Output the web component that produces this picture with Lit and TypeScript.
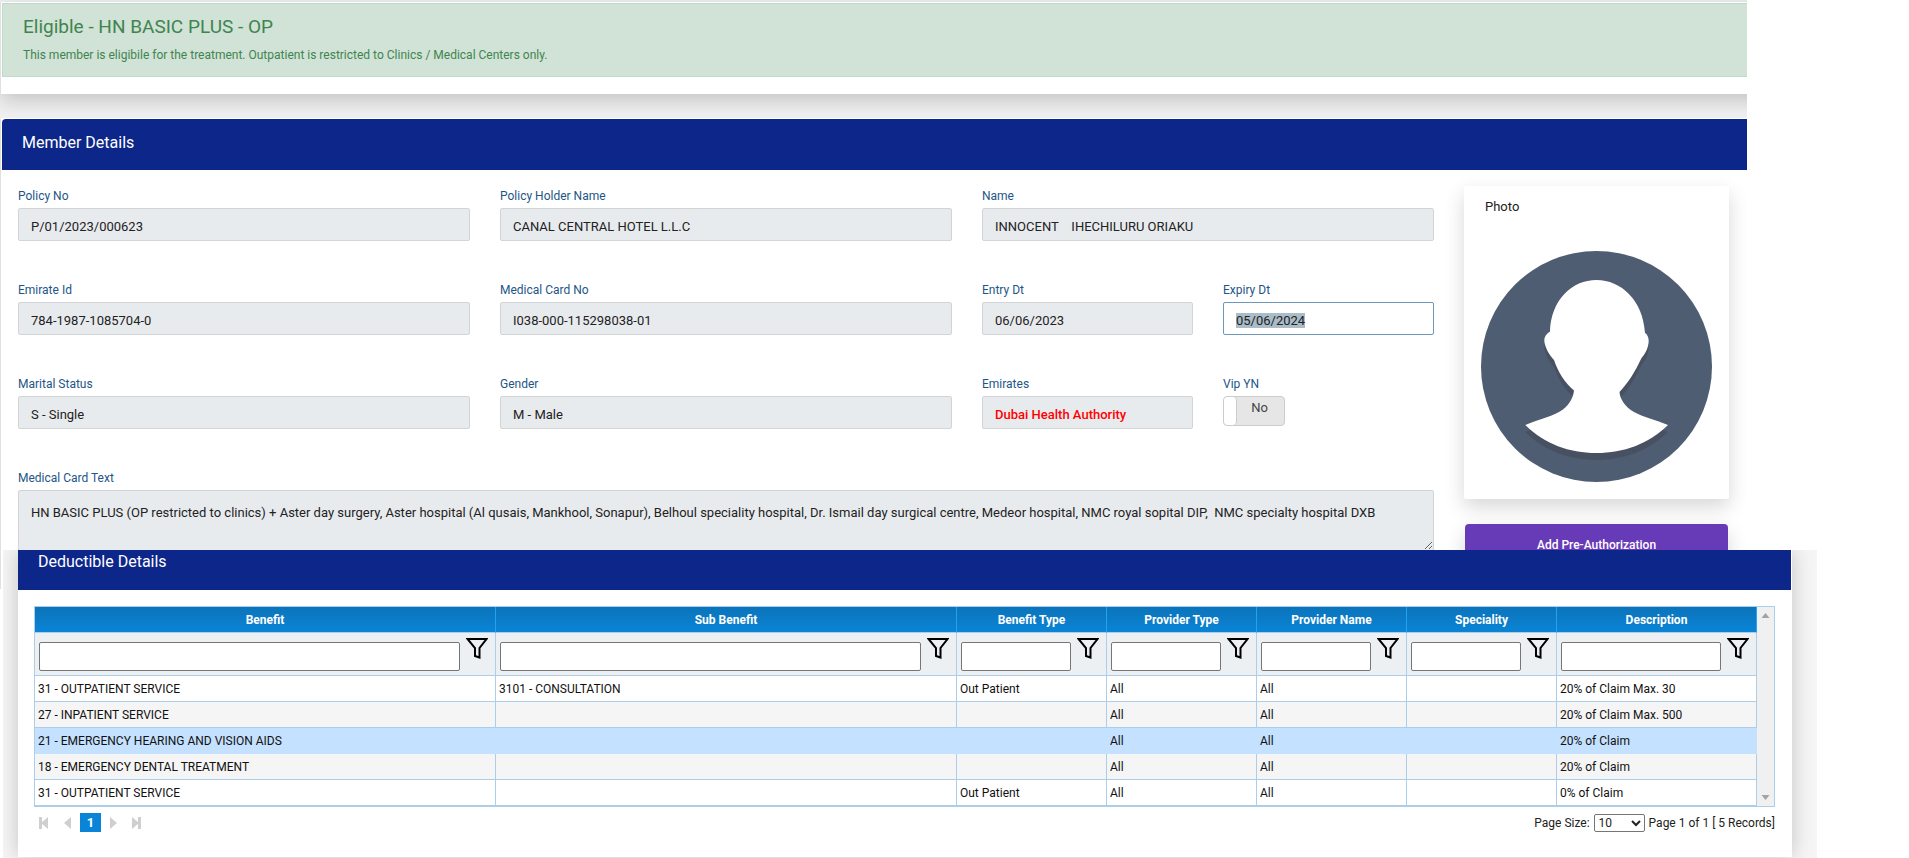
import { LitElement, html, css, svg, nothing } from "lit";
import { customElement } from "lit/decorators.js";
import { classMap } from "lit/directives/class-map.js";

interface Field {
  id: string;
  label: string;
  value: string;
  wide?: boolean;
  alert?: boolean;
  editable?: boolean;
}

const fieldsTop: Field[] = [
  { id: "policy", label: "Policy No", value: "P/01/2023/000623", wide: true },
  { id: "holder", label: "Policy Holder Name", value: "CANAL CENTRAL HOTEL L.L.C", wide: true },
  { id: "name", label: "Name", value: "INNOCENT    IHECHILURU ORIAKU", wide: true },
  { id: "emirate-id", label: "Emirate Id", value: "784-1987-1085704-0", wide: true },
  { id: "card-no", label: "Medical Card No", value: "I038-000-115298038-01", wide: true },
  { id: "entry", label: "Entry Dt", value: "06/06/2023" },
  { id: "expiry", label: "Expiry Dt", value: "05/06/2024", editable: true },
  { id: "marital", label: "Marital Status", value: "S - Single", wide: true },
  { id: "gender", label: "Gender", value: "M - Male", wide: true },
  { id: "emirates", label: "Emirates", value: "Dubai Health Authority", alert: true },
];

const cardText =
  "HN BASIC PLUS (OP restricted to clinics) + Aster day surgery, Aster hospital (Al qusais, Mankhool, Sonapur), Belhoul speciality hospital, Dr. Ismail day surgical centre, Medeor hospital, NMC royal sopital DIP,  NMC specialty hospital DXB";

const columns = [
  "Benefit",
  "Sub Benefit",
  "Benefit Type",
  "Provider Type",
  "Provider Name",
  "Speciality",
  "Description",
];

const rows: string[][] = [
  ["31 - OUTPATIENT SERVICE", "3101 - CONSULTATION", "Out Patient", "All", "All", "", "20% of Claim Max. 30"],
  ["27 - INPATIENT SERVICE", "", "", "All", "All", "", "20% of Claim Max. 500"],
  ["21 - EMERGENCY HEARING AND VISION AIDS", "", "", "All", "All", "", "20% of Claim"],
  ["18 - EMERGENCY DENTAL TREATMENT", "", "", "All", "All", "", "20% of Claim"],
  ["31 - OUTPATIENT SERVICE", "", "Out Patient", "All", "All", "", "0% of Claim"],
];

@customElement("member-panel")
export class MemberPanel extends LitElement {
  static styles = css`
    :host {
      display: block;
      border-left: 1px solid #e0e0e0;
      background: #fff;
      padding-left: 1px;
      border-top: 1px solid #fff;
    }
    .title {
      margin: 0;
      background: #0d2689;
      color: #fff;
      font-size: 16px;
      line-height: 22px;
      font-weight: 400;
      padding: 13px 20px 16px;
      border-top-left-radius: 4px;
    }
    .body {
      display: flex;
      align-items: flex-start;
      gap: 30px;
      padding: 16px 18px 23px 16px;
    }
    .fields {
      flex: 1;
      min-width: 0;
      display: grid;
      grid-template-columns: repeat(6, minmax(0, 1fr));
      gap: 40px 30px;
      padding-top: 1px;
    }
    .field {
      display: flex;
      flex-direction: column;
      align-items: stretch;
      gap: 3px;
    }
    .wide {
      grid-column: span 2;
    }
    .full {
      grid-column: 1 / -1;
    }
    label {
      font-size: 12px;
      line-height: 18px;
      color: #1d5687;
    }
    .box {
      box-sizing: border-box;
      width: 100%;
      margin: 0;
      height: 33px;
      padding: 4px 12px 0;
      border: 1px solid #d2d4d6;
      border-radius: 2px;
      background: #e8ebee;
      color: #222;
      font-family: inherit;
      font-size: 13px;
      outline: none;
    }
    .editable {
      background: #fff;
      border-color: #6d98b9;
    }
    .editable::selection {
      background: #a9bcc8;
      color: #222;
    }
    .alert {
      color: #f00;
      font-weight: 500;
    }
    .area {
      display: block;
      height: 61px;
      padding-top: 12px;
      line-height: 20px;
    }
    .toggle {
      box-sizing: border-box;
      display: flex;
      width: 62px;
      height: 30px;
      border: 1px solid #ccc;
      border-radius: 4px;
      background: #e6e6e6;
      overflow: hidden;
    }
    .knob {
      appearance: none;
      margin: 0;
      width: 13px;
      height: 28px;
      background: #fff;
      border-right: 1px solid #ccc;
      border-radius: 4px;
    }
    .state {
      flex: 1;
      padding-right: 2px;
      text-align: center;
      font-size: 13px;
      line-height: 22px;
      color: #444;
    }
    .side {
      width: 265px;
      display: flex;
      flex-direction: column;
      gap: 25px;
    }
    .photo {
      box-shadow: 0 8px 20px rgba(0, 0, 0, 0.16);
      border-radius: 2px;
      padding: 12px 17px 17px;
      background: #fff;
    }
    .caption {
      margin: 0 4px 35px;
      font-size: 13px;
      line-height: 18px;
      font-weight: 400;
      color: #222;
    }
    .avatar {
      display: block;
      width: 100%;
    }
    .add {
      margin: 0 1px;
      height: 42px;
      padding: 0;
      border: 0;
      border-radius: 4px;
      background: #673ab7;
      color: #fff;
      font-family: inherit;
      font-size: 12px;
      font-weight: 500;
      box-shadow: 0 8px 20px rgba(0, 0, 0, 0.16);
    }
  `;

  firstUpdated() {
    const expiry = this.renderRoot.querySelector<HTMLInputElement>("#expiry");
    expiry?.focus();
    expiry?.select();
  }

  private field(f: Field) {
    return html`<div class=${classMap({ field: true, wide: !!f.wide })}>
      <label for=${f.id}>${f.label}</label>
      <input
        id=${f.id}
        class=${classMap({ box: true, alert: !!f.alert, editable: !!f.editable })}
        type="text"
        .value=${f.value}
        ?readonly=${!f.editable}
      />
    </div>`;
  }

  render() {
    const torso =
      "M115.500 29C91 29 70 49 69 80.500C65 83 63 86 63.300 90C64 97 69 105 73 109C77 121 84 132 93 139.500C92 148 87 156 78 161C69 166 56 169 44.300 174C64 193 88 202 115.500 202C143 202 167 193 187 174C175 169 162 166 153 161C144 156 139 148 138.500 141C147 132 154 121 160.500 107C164 103 167.500 97 167.700 90C167.700 86 166 83 164 82C162 49 140 29 115.500 29Z";
    return html`
      <h2 class="title">Member Details</h2>
      <div class="body">
        <div class="fields">
          ${fieldsTop.map((f) => this.field(f))}
          <div class="field">
            <label for="vip">Vip YN</label>
            <div class="toggle">
              <input id="vip" class="knob" type="checkbox" role="switch" />
              <span class="state">No</span>
            </div>
          </div>
          <div class="field full">
            <label for="card-text">Medical Card Text</label>
            <textarea id="card-text" class="box area" readonly .value=${cardText}></textarea>
          </div>
        </div>
        <div class="side">
          <section class="photo">
            <h3 class="caption">Photo</h3>
            <svg class="avatar" viewBox="0 0 231 231" role="img" aria-label="Member photo">
              <circle cx="115.500" cy="115.500" r="115.500" fill="#4f5d73" />
              <path d=${torso} transform="translate(0 7)" fill="#485162" />
              <path d=${torso} fill="#fff" />
            </svg>
          </section>
          <button class="add" type="button">Add Pre-Authorization</button>
        </div>
      </div>
    `;
  }
}

@customElement("deductible-panel")
export class DeductiblePanel extends LitElement {
  static styles = css`
    :host {
      display: block;
      overflow: hidden;
      background: #f5f5f5;
      padding: 0 25px 1px 15px;
    }
    .card {
      background: #fff;
      box-shadow: 0 0 20px rgba(0, 0, 0, 0.2);
      padding-bottom: 25px;
    }
    .title {
      margin: 0 1px 0 0;
      background: #0d2689;
      color: #fff;
      font-size: 16px;
      line-height: 22px;
      font-weight: 400;
      padding: 1px 20px 17px;
    }
    .body {
      padding: 16px 17px 0 16px;
      font-size: 12px;
      color: #111;
    }
    .grid {
      display: flex;
      border: 1px solid #abcfea;
    }
    table {
      flex: 1;
      width: 100%;
      table-layout: fixed;
      border-collapse: separate;
      border-spacing: 0;
    }
    .mid {
      width: 150px;
    }
    .last {
      width: 200px;
    }
    .head {
      height: 25px;
      padding: 0;
      background: linear-gradient(#0b74ba, #0a84d6);
      color: #fff;
      font-weight: 700;
      border-right: 1px solid #26a0f0;
      border-bottom: 1px solid #abcfea;
    }
    .filter {
      height: 42px;
      padding: 0;
      background: #edf0f3;
      border-right: 1px solid #abcfea;
      border-bottom: 1px solid #abcfea;
    }
    .search {
      display: flex;
      align-items: flex-start;
      gap: 6px;
      padding: 4px 7px 4px 4px;
    }
    .query {
      flex: 1;
      min-width: 0;
      box-sizing: border-box;
      height: 29px;
      margin: 5px 0 0;
      border: 1px solid #767676;
      border-radius: 2px;
      background: #fff;
      font-family: inherit;
      font-size: 12px;
    }
    .funnel {
      width: 22px;
      height: 22px;
      border: 0;
      padding: 0;
      background: none;
    }
    .funnel svg {
      display: block;
    }
    .cell {
      height: 25px;
      padding: 0 3px;
      border-right: 1px solid #abcfea;
      border-bottom: 1px solid #abcfea;
      line-height: 16px;
      white-space: nowrap;
    }
    .odd {
      background: #f5f5f5;
    }
    .picked {
      background: #c4e1ff;
    }
    .picked .cell {
      border-color: #c4e1ff;
    }
    .bar {
      width: 17px;
      background: #f0f0f0;
      display: flex;
      flex-direction: column;
      justify-content: space-between;
      align-items: center;
      padding: 5px 0;
    }
    .footer {
      display: flex;
      align-items: center;
      justify-content: space-between;
      padding-top: 6px;
      height: 19px;
    }
    .pages {
      display: flex;
      align-items: center;
      gap: 8px;
      padding-left: 5px;
    }
    .step {
      display: flex;
      align-items: center;
      justify-content: center;
      width: 9px;
      height: 19px;
      padding: 0;
      border: 0;
      background: none;
    }
    .near {
      margin-left: 7px;
    }
    .far {
      margin-left: 6px;
    }
    .current {
      width: 21px;
      height: 19px;
      padding: 0;
      border: 0;
      background: #0a84d6;
      color: #fff;
      font-family: inherit;
      font-size: 13px;
      font-weight: 700;
    }
    .size {
      display: flex;
      align-items: center;
      gap: 4px;
      font-size: 12px;
      color: #222;
    }
    .select {
      box-sizing: border-box;
      width: 51px;
      height: 18px;
      padding: 0;
      border: 1px solid #767676;
      border-radius: 2px;
      background: #fff;
      color: #222;
      font-family: inherit;
      font-size: 12px;
    }
  `;

  private arrow(points: string) {
    return html`<svg width="9" height="7" viewBox="0 0 9 7" aria-hidden="true">
      <polygon points=${points} fill="#a3a3a3" />
    </svg>`;
  }

  private step(label: string, cls: string, points: string, barX: number | null) {
    return html`<button class="step ${cls}" type="button" aria-label=${label}>
      <svg width="9" height="12" viewBox="0 0 9 12" fill="#cfcfcf">
        <polygon points=${points} />
        ${barX === null ? nothing : svg`<rect x=${barX} y="0" width="3" height="12" />`}
      </svg>
    </button>`;
  }

  render() {
    return html`
      <section class="card">
        <h2 class="title">Deductible Details</h2>
        <div class="body">
          <div class="grid">
            <table>
              <colgroup>
                <col />
                <col />
                <col class="mid" />
                <col class="mid" />
                <col class="mid" />
                <col class="mid" />
                <col class="last" />
              </colgroup>
              <thead>
                <tr>
                  ${columns.map((c) => html`<th class="head" scope="col">${c}</th>`)}
                </tr>
                <tr>
                  ${columns.map(
                    (c) => html`<td class="filter">
                      <div class="search">
                        <input class="query" type="text" aria-label="Filter ${c}" />
                        <button class="funnel" type="button" aria-label="Apply ${c} filter">
                          <svg width="22" height="22" viewBox="0 0 22 22">
                            <path
                              d="M1.500 2H20.500L13.500 11V20.500L9 19V11Z"
                              fill="none"
                              stroke="#000"
                              stroke-width="2"
                            />
                          </svg>
                        </button>
                      </div>
                    </td>`
                  )}
                </tr>
              </thead>
              <tbody>
                ${rows.map(
                  (r, i) => html`<tr class=${classMap({ odd: i % 2 === 1, picked: i === 2 })}>
                    ${r.map((t) => html`<td class="cell">${t}</td>`)}
                  </tr>`
                )}
              </tbody>
            </table>
            <div class="bar">
              ${this.arrow("4.500,1 8.500,6 0.500,6")} ${this.arrow("0.500,1 8.500,1 4.500,6")}
            </div>
          </div>
          <div class="footer">
            <nav class="pages" aria-label="Pages">
              ${this.step("First page", "", "9,0 9,12 2,6", 0)}
              ${this.step("Previous page", "near", "8,0 8,12 1,6", null)}
              <button class="current" type="button">1</button>
              ${this.step("Next page", "", "1,0 1,12 8,6", null)}
              ${this.step("Last page", "far", "0,0 0,12 7,6", 6)}
            </nav>
            <div class="size">
              <label for="size">Page Size:</label>
              <select id="size" class="select">
                <option>10</option>
                <option>20</option>
                <option>50</option>
              </select>
              <span>Page 1 of 1 [ 5 Records]</span>
            </div>
          </div>
        </div>
      </section>
    `;
  }
}

@customElement("app-root")
export class AppRoot extends LitElement {
  static styles = css`
    :host {
      display: block;
      background: #fff;
      font-family: Roboto, "Liberation Sans", sans-serif;
    }
    .member {
      margin-right: 162px;
      padding-top: 2px;
      background: #f1f1f1;
      overflow: hidden;
    }
    .status {
      background: #fff;
      border-left: 1px solid #e0e0e0;
      padding: 1px 0 17px 1px;
      margin: 0 -24px 24px 0;
      box-shadow: 0 6px 20px rgba(0, 0, 0, 0.2);
    }
    .eligible {
      border: 1px solid #c1d9ca;
      border-right: 0;
      background: #d1e2d6;
      color: #3f8550;
      padding: 11px 20px 12px;
    }
    .heading {
      margin: 0 0 7px;
      font-size: 19px;
      line-height: 24px;
      font-weight: 400;
    }
    .note {
      margin: 0;
      font-size: 12px;
      line-height: 18px;
    }
    .deductible {
      position: relative;
      margin: -39px 92px 0 3px;
    }
  `;

  render() {
    return html`
      <main>
        <div class="member">
          <div class="status">
            <div class="eligible" role="status">
              <h1 class="heading">Eligible - HN BASIC PLUS - OP</h1>
              <p class="note">
                This member is eligibile for the treatment. Outpatient is restricted to Clinics / Medical Centers only.
              </p>
            </div>
          </div>
          <member-panel></member-panel>
        </div>
        <deductible-panel class="deductible"></deductible-panel>
      </main>
    `;
  }
}
